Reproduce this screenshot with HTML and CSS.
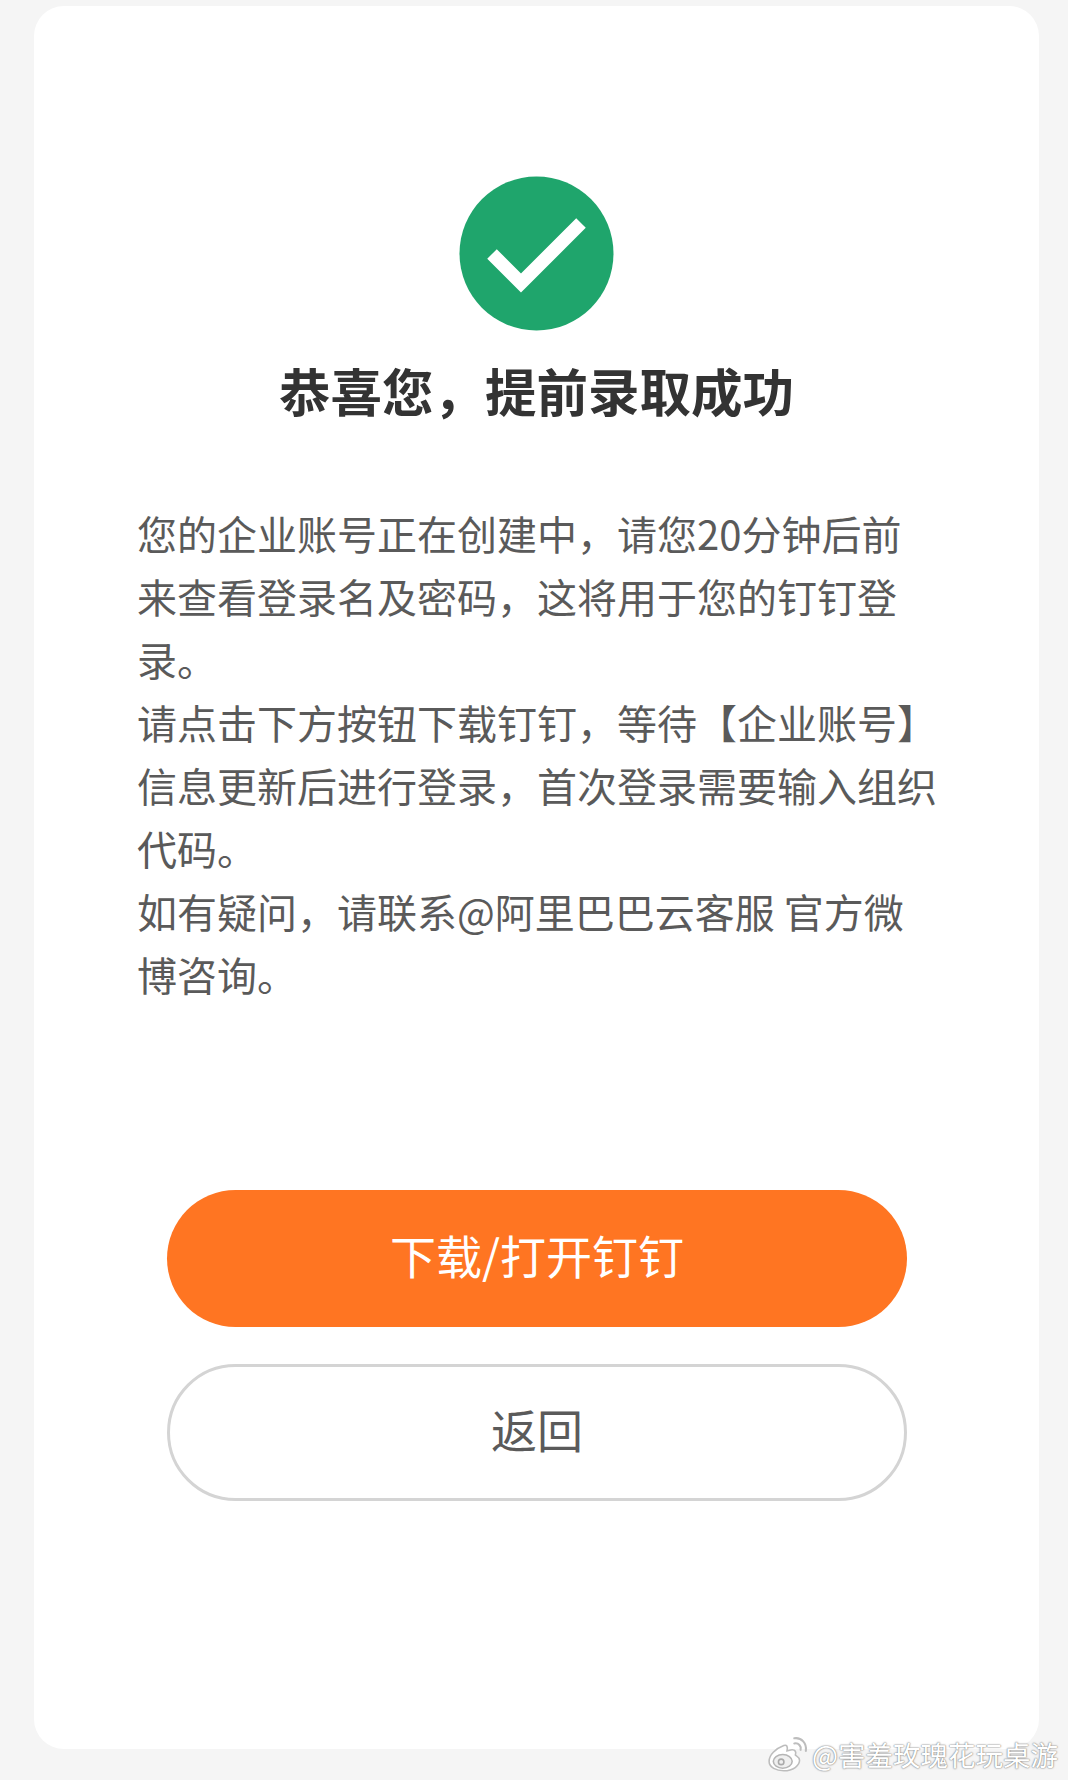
FILE: index.html
```html
<!DOCTYPE html>
<html lang="zh-CN">
<head>
    <meta charset="UTF-8">
    <meta name="viewport" content="width=device-width, initial-scale=1.0">
    <title>提前录取成功</title>
    <link rel="stylesheet" href="styles.css">
</head>
<body>
    <div class="card">
      <svg class="success-icon" viewBox="0 0 155 155" aria-hidden="true">
        <circle cx="77.5" cy="77.5" r="77" fill="#1fa56c"/>
        <path d="M33 78 L62 107 L122 47" fill="none" stroke="#fff" stroke-width="13.5"/>
      </svg>
      <h1 class="title">恭喜您，提前录取成功</h1>

      <div class="message">
        <p>您的企业账号正在创建中，请您20分钟后前来查看登录名及密码，这将用于您的钉钉登录。</p>
        <p>请点击下方按钮下载钉钉，等待【企业账号】信息更新后进行登录，首次登录需要输入组织代码。</p>
        <p>如有疑问，请联系@阿里巴巴云客服 官方微博咨询。</p>
      </div>

      <div class="actions">
        <button type="button" class="btn btn-primary">下载/打开钉钉</button>
        <button type="button" class="btn btn-back">返回</button>
      </div>
    </div>

    <div class="watermark">
      <svg class="weibo-icon" viewBox="0 0 40 34" aria-hidden="true">
        <path d="M16 9 C8 12 2 18 2 24 C2 30 9 33 16 33 C25 33 31 28 31 23 C31 20 28 19 27 18 C28 15 27 13 24 13 C22 13 20 14 19 14 C20 10 19 8 16 9 Z" fill="#fff" stroke="#bdbdbd" stroke-width="1.5"/>
        <ellipse cx="15" cy="24" rx="9" ry="6.5" fill="#efefef" stroke="#b5b5b5" stroke-width="1.5"/>
        <circle cx="13.5" cy="24.5" r="2.6" fill="none" stroke="#aaa" stroke-width="1.5"/>
        <path d="M26 2 C33 1 38 7 37 14 M26 7 C30 6 33 10 32 13" fill="none" stroke="#bdbdbd" stroke-width="2" stroke-linecap="round"/>
      </svg>
      <span>@害羞玫瑰花玩桌游</span>
    </div>
</body>
</html>
```

FILE: styles.css
```css
html,
body {
  height: 100%;
}

body {
  position: relative;
  box-sizing: border-box;
  margin: 0;
  padding: 6px 29px 31px 34px;
  background-color: #f5f5f5;
  font-family: "Noto Sans CJK SC", "Noto Sans", sans-serif;
}

.card {
  box-sizing: border-box;
  height: 100%;
  padding-top: 170px;
  border-radius: 30px;
  background-color: #fff;
  text-align: center;
}

.success-icon {
  display: block;
  width: 155px;
  height: 155px;
  margin: 0 auto;
}

.title {
  margin: 26px 0 0;
  font-size: 51.5px;
  line-height: 66px;
  font-weight: 700;
  color: #333;
}

.message {
  width: 801px;
  margin: 79px 0 0 103px;
  font-size: 40px;
  line-height: 63px;
  color: #5a5a5a;
  text-align: left;
}

.message p {
  margin: 0;
}

.actions {
  display: flex;
  flex-direction: column;
  gap: 37px;
  width: 740px;
  margin: 184px 0 0 133px;
}

.btn {
  height: 137px;
  padding: 0 0 9px;
  border-radius: 69px;
  font-family: inherit;
  font-size: 46px;
  cursor: pointer;
}

.btn-primary {
  border: none;
  background-color: #ff7522;
  color: #fff;
}

.btn-back {
  border: 3px solid #d4d4d4;
  background-color: #fff;
  color: #5a5a5a;
}

.watermark {
  position: absolute;
  right: 10px;
  bottom: 6px;
  display: flex;
  align-items: center;
  gap: 3px;
  font-size: 27.5px;
  line-height: 40px;
  color: #fff;
  text-shadow: 0 0 2px #777, 0 0 1px #888;
}

.weibo-icon {
  width: 42px;
  height: 36px;
}
```
